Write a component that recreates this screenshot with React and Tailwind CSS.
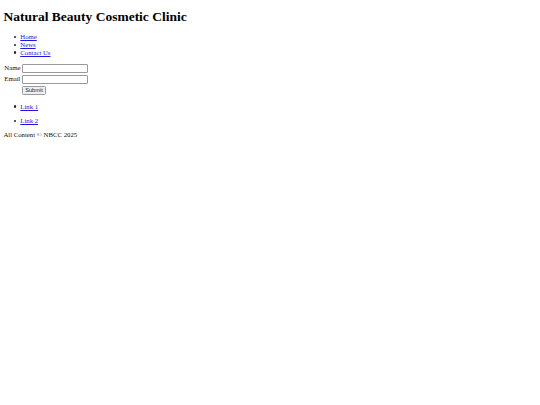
import React from 'react';

const navLinks = ['Home', 'News', 'Contact Us'];

const Bullet = () => (
  <span className="mr-[3.6px] ml-[-6px] flex w-[2.4px] shrink-0 items-center">
    <span className="h-[2.2px] w-[2.2px] rounded-full bg-[#222]" />
  </span>
);

const App = () => {
  return (
    <div className="min-h-[405px] bg-white px-[3.4px] pt-[8.5px] font-['Liberation_Serif','Times_New_Roman',serif] text-[6.75px] leading-[7.76px] text-[#111]">
      {/* Header */}
      <h1 className="text-[13.5px] leading-[15.5px] font-bold text-black">Natural Beauty Cosmetic Clinic</h1>

      {/* Nav */}
      <ul className="mt-[9.1px] pl-[16.9px]">
        {navLinks.map((item) => (
          <li key={item} className="flex">
            <Bullet />
            <a href="#" className="text-[#1a1ad8] underline">{item}</a>
          </li>
        ))}
      </ul>

      {/* Form */}
      <form className="mt-[7.6px] ml-[0.9px] grid grid-cols-[auto_auto] justify-start gap-x-[1.6px] gap-y-[2.4px] items-center">
        <label>Name</label>
        <input type="text" className="h-[8.6px] w-[66px] border border-[#9a9a9a] rounded-[1px] bg-white" />
        <label>Email</label>
        <input type="text" className="h-[8.6px] w-[66px] border border-[#9a9a9a] rounded-[1px] bg-white" />
        <span />
        <button type="button" className="h-[9.3px] w-[24px] border border-[#9a9a9a] rounded-[1.5px] bg-[#efefef] font-['Liberation_Sans',Arial,sans-serif] text-[5.6px] leading-[7px] text-[#222]">
          Submit
        </button>
      </form>

      {/* Sidebar links */}
      <ul className="mt-[7.4px] pl-[16.9px]">
        <li className="mb-[6.6px] flex">
          <Bullet />
          <a href="#" className="text-[#1a1ad8] underline">Link 1</a>
        </li>
        <li className="flex">
          <Bullet />
          <a href="#" className="text-[#1a1ad8] underline">Link 2</a>
        </li>
      </ul>

      {/* Footer */}
      <p className="mt-[6.2px]">All Content © NBCC 2025</p>
    </div>
  );
};

export default App;
